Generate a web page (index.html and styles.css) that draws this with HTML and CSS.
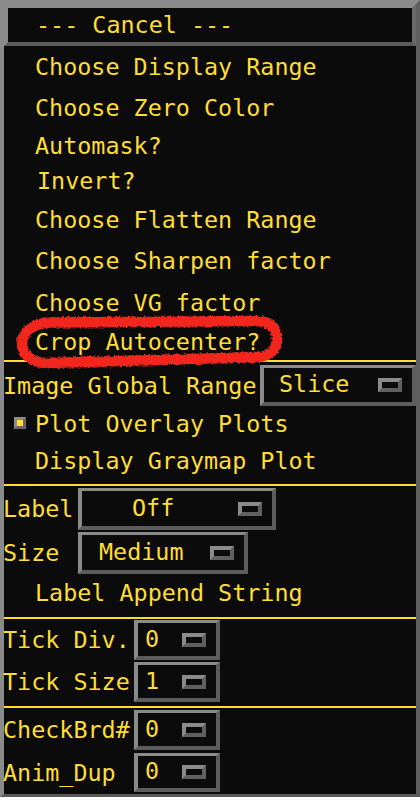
FILE: index.html
```html
<!DOCTYPE html>
<html>
<head>
<meta charset="utf-8">
<link rel="stylesheet" href="styles.css">
</head>
<body>
<div class="screen">
  <div class="frame">
    <div class="cancel">--- Cancel ---</div>
    <div class="panel">
      <div class="item h42">Choose Display Range</div>
      <div class="item h40">Choose Zero Color</div>
      <div class="item h36">Automask?</div>
      <div class="item h34 shift">Invert?</div>
      <div class="item h44">Choose Flatten Range</div>
      <div class="item h38">Choose Sharpen factor</div>
      <div class="item h47">Choose VG factor</div>
      <div class="item h30">Crop Autocenter?</div>
      <div class="sep sep-top"></div>

      <div class="row row-igr">
        <span class="lbl">Image Global Range</span>
        <div class="opt opt-slice"><span class="val val-slice">Slice</span><span class="ind"></span></div>
      </div>
      <div class="chk-row">
        <span class="chk"></span><span>Plot Overlay Plots</span>
      </div>
      <div class="item h46">Display Graymap Plot</div>
      <div class="sep"></div>

      <div class="row lrow pt2">
        <span class="lbl w74">Label</span>
        <div class="opt opt-label h42b"><span class="val val-off">Off</span><span class="ind"></span></div>
      </div>
      <div class="row lrow pt2">
        <span class="lbl w74">Size</span>
        <div class="opt opt-size h42b"><span class="val val-med">Medium</span><span class="ind"></span></div>
      </div>
      <div class="item append">Label Append String</div>
      <div class="sep"></div>

      <div class="row lrow pt1">
        <span class="lbl w130">Tick Div.</span>
        <div class="opt opt-small h40b"><span class="val val-num">0</span><span class="ind"></span></div>
      </div>
      <div class="row lrow pt2 pb4">
        <span class="lbl w130">Tick Size</span>
        <div class="opt opt-small h40b"><span class="val val-num">1</span><span class="ind"></span></div>
      </div>
      <div class="sep"></div>

      <div class="row lrow pt2">
        <span class="lbl w130">CheckBrd#</span>
        <div class="opt opt-small h40b"><span class="val val-num">0</span><span class="ind"></span></div>
      </div>
      <div class="row lrow pt3">
        <span class="lbl w130">Anim_Dup</span>
        <div class="opt opt-small h39b"><span class="val val-num">0</span><span class="ind"></span></div>
      </div>
    </div>
  </div>
  <svg class="mark" width="420" height="797" viewBox="0 0 420 797">
    <defs>
      <filter id="rough" x="-10%" y="-50%" width="120%" height="200%">
        <feTurbulence type="fractalNoise" baseFrequency="0.5" numOctaves="2" seed="3" result="n"/>
        <feDisplacementMap in="SourceGraphic" in2="n" scale="5" xChannelSelector="R" yChannelSelector="G" result="d"/>
        <feGaussianBlur in="d" stdDeviation="0.5"/>
      </filter>
    </defs>
    <path d="M 50 322.5 L 258 321 C 283 321, 284 356, 258 357 L 48 363 C 14 364, 12 324, 50 322.5 Z"
          fill="none" stroke="#f2261b" stroke-width="10.5" stroke-linejoin="round" filter="url(#rough)"/>
  </svg>
</div>
</body>
</html>
```
FILE: styles.css
```css
body {
  margin: 0;
  background: #ffffff;
  font-family: "DejaVu Sans Mono", "Liberation Mono", monospace;
}

.screen {
  position: relative;
  width: 420px;
  height: 797px;
}

.frame {
  box-sizing: border-box;
  width: 420px;
  height: 797px;
  border-style: solid;
  border-width: 4px 4px 3px 4px;
  border-color: #8b8b8b #5e5e5e #5a5a5a #8b8b8b;
  background: #0b0b0b;
  display: flex;
  flex-direction: column;
  color: #ffdd33;
  font-size: 23.4px;
}

.cancel {
  box-sizing: border-box;
  height: 42px;
  border: 4px solid;
  border-color: #8b8b8b #6a6a6a #5a5a5a #8b8b8b;
  line-height: 34px;
  padding-left: 28px;
  white-space: pre;
}

.panel {
  flex: 1;
  display: flex;
  flex-direction: column;
}

.item {
  padding-left: 31px;
  white-space: pre;
}
.shift { padding-left: 33px; }

.h30 { height: 30px; line-height: 30px; }
.h34 { height: 34px; line-height: 34px; }
.h36 { height: 36px; line-height: 36px; }
.h38 { height: 38px; line-height: 38px; }
.h40 { height: 40px; line-height: 40px; }
.h42 { height: 42px; line-height: 42px; }
.h44 { height: 44px; line-height: 44px; }
.h46 { height: 46px; line-height: 46px; }
.h47 { height: 47px; line-height: 47px; }

.append {
  height: 38px;
  line-height: 38px;
  padding-bottom: 5px;
}

.sep {
  height: 2px;
  background: #ffdd33;
  flex: none;
}
.sep-top { margin-top: 3px; }

.row {
  display: flex;
  white-space: pre;
}

.row-igr {
  height: 48px;
}
.row-igr .lbl {
  line-height: 48px;
}

.lbl {
  margin-left: -1px;
}

.w74 { width: 75px; flex: none; }
.w130 { width: 131px; flex: none; }

.lrow {
  align-items: center;
}
.pt1 { padding-top: 1px; }
.pt2 { padding-top: 2px; }
.pt3 { padding-top: 3px; }
.pb4 { padding-bottom: 4px; }

.opt {
  box-sizing: border-box;
  border-style: solid;
  border-width: 3px 4px 4px 4px;
  border-color: #8b8b8b #5c5c5c #5c5c5c #8b8b8b;
  display: flex;
  align-items: center;
  flex: none;
}

.opt-slice {
  width: 156px;
  height: 41px;
  margin-top: 3px;
  margin-left: auto;
}
.opt-label { width: 198px; }
.opt-size { width: 170px; }
.opt-small { width: 86px; }

.h42b { height: 42px; }
.h40b { height: 40px; }
.h39b { height: 39px; }

.val { line-height: 1; }
.val-slice { padding-left: 15px; }
.val-off { padding-left: 50px; }
.val-med { padding-left: 17px; }
.val-num { padding-left: 7px; }

.ind {
  box-sizing: border-box;
  width: 24px;
  height: 14px;
  border: 4px solid;
  border-color: #8b8b8b #606060 #606060 #8b8b8b;
  background: #0b0b0b;
  margin-left: auto;
  margin-right: 10px;
  flex: none;
}

.chk-row {
  display: flex;
  align-items: center;
  height: 28px;
  padding-left: 10px;
  white-space: pre;
}

.chk {
  box-sizing: border-box;
  width: 12px;
  height: 12px;
  border: 3px solid;
  border-color: #8b8b8b #666666 #666666 #8b8b8b;
  background: #ffdd33;
  margin-right: 9px;
  margin-top: -3px;
  flex: none;
}

.mark {
  position: absolute;
  left: 0;
  top: 0;
  pointer-events: none;
}
```
